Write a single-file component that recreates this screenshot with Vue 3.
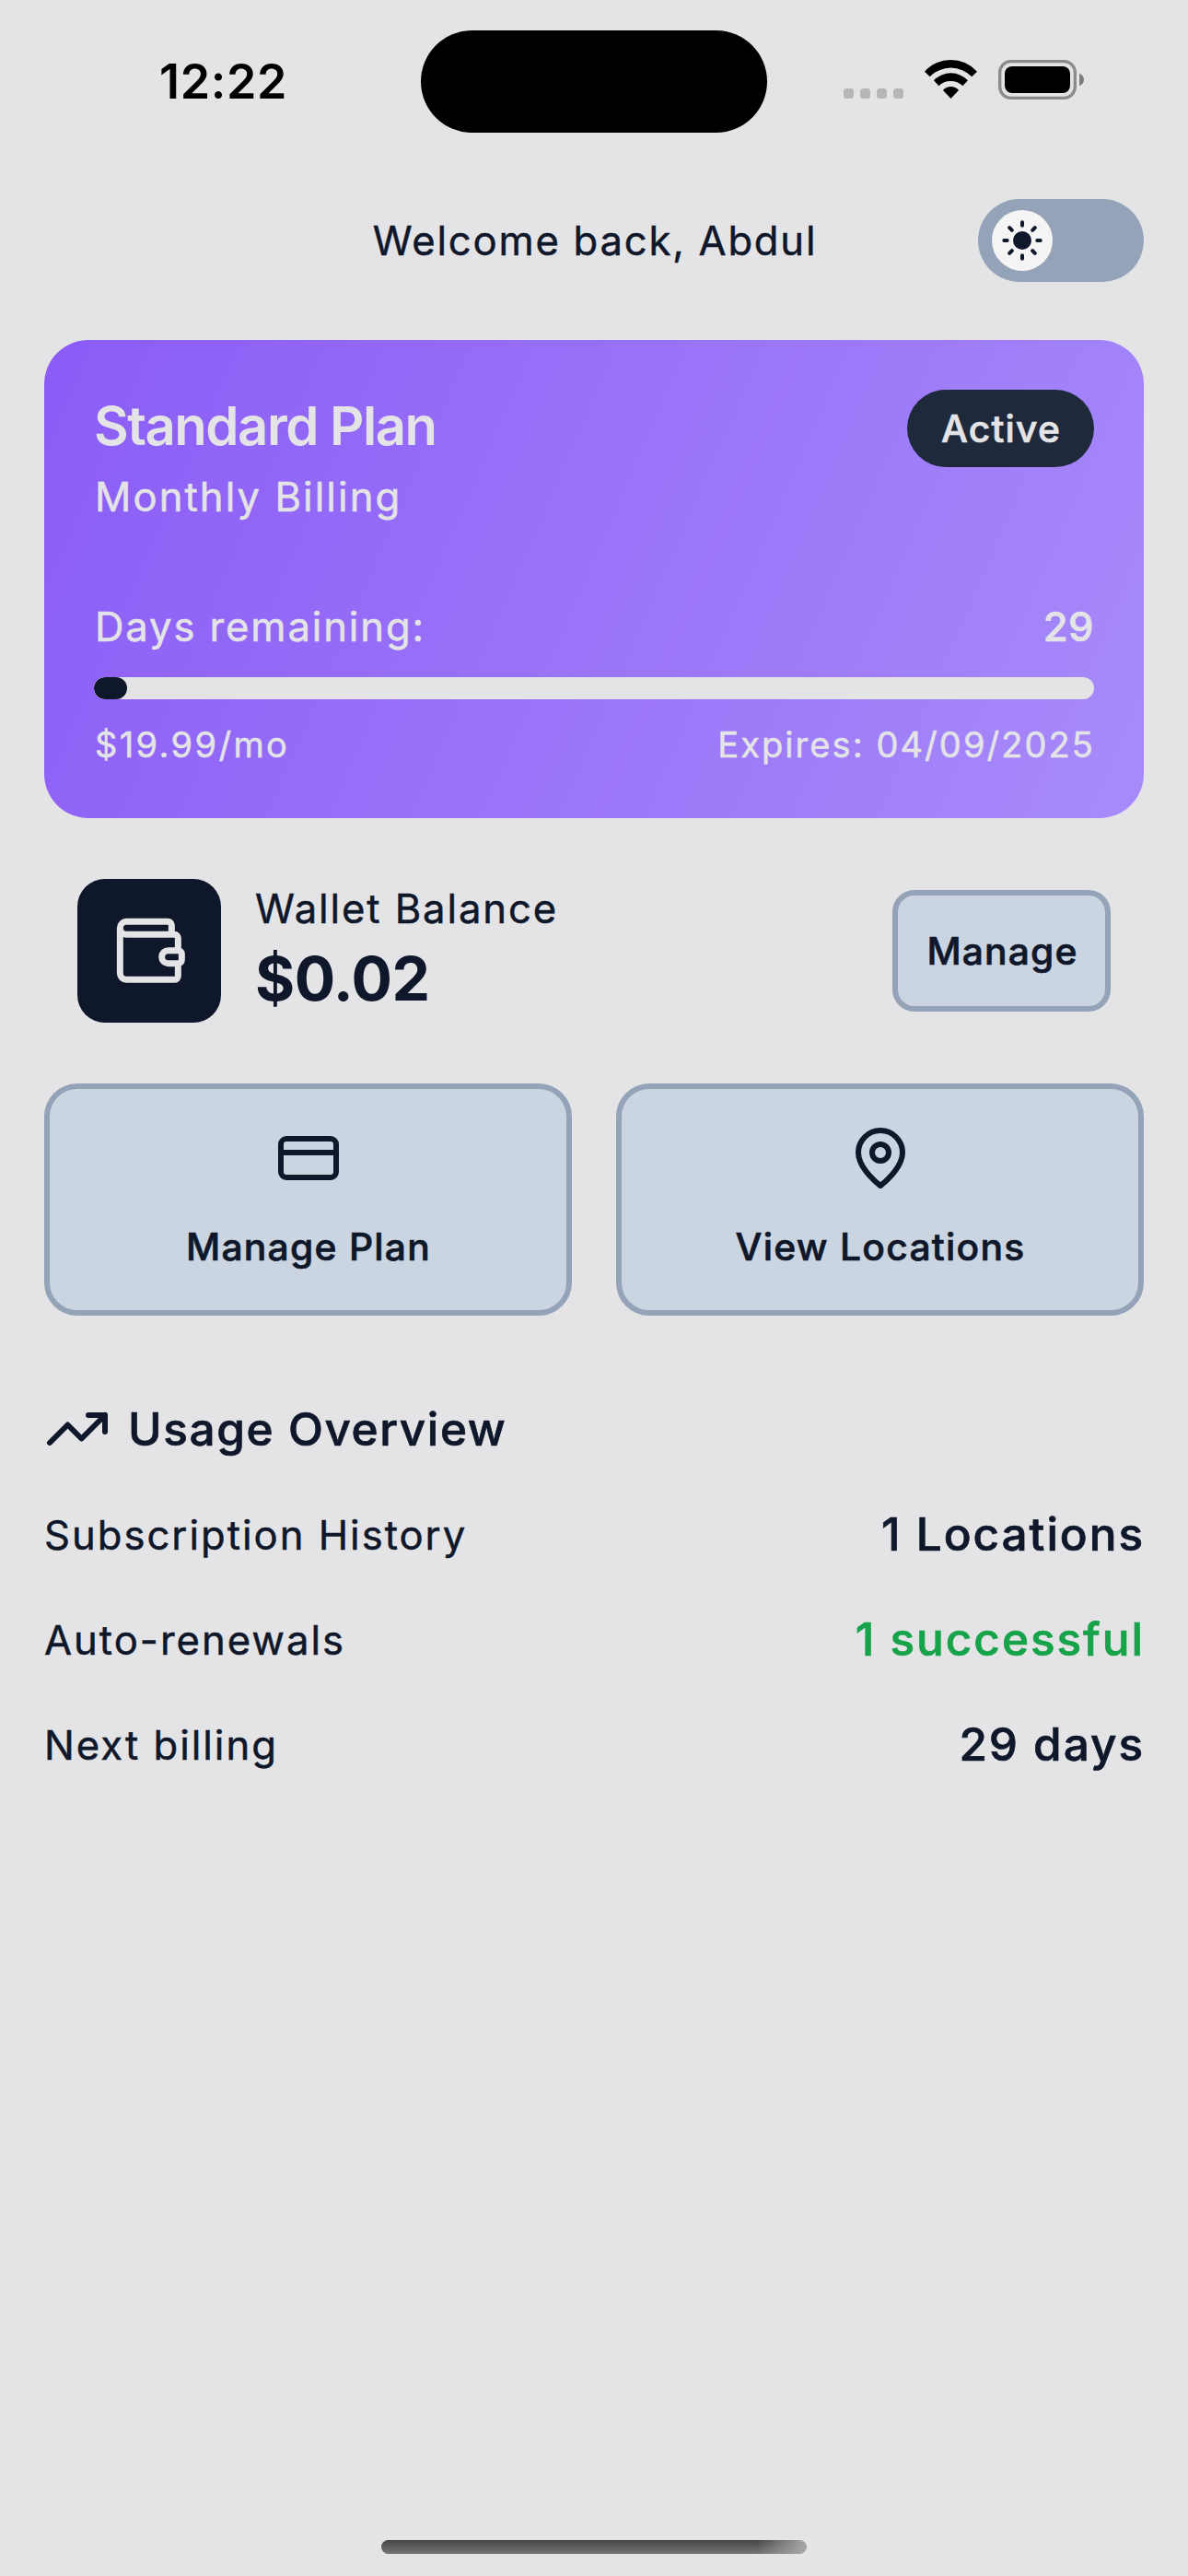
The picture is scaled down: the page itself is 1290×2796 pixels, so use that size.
<script setup>
import { ref, computed } from 'vue'

const daysRemaining = ref(29)
const progress = computed(() => ((30 - daysRemaining.value) / 30) * 100)

const usage = computed(() => [
  { label: 'Subscription History', value: '1 Locations' },
  { label: 'Auto-renewals', value: '1 successful', positive: true },
  { label: 'Next billing', value: `${daysRemaining.value} days` },
])
</script>

<template>
  <div class="screen">
    <div class="status-bar">
      <span class="time">12:22</span>
      <div class="island"></div>
      <div class="signal"><i v-for="n in 4" :key="n"></i></div>
      <svg class="wifi" viewBox="372 75 171 126">
        <path d="M372 113A115 115 0 0 1 543 113L526 130A95 95 0 0 0 389 130Z" />
        <path d="M402 142A76 76 0 0 1 513 142L496 160A55 55 0 0 0 418 160Z" />
        <path d="M432 174A33 33 0 0 1 483 174L457.5 201Z" />
      </svg>
      <svg class="battery" viewBox="612 75 279 129">
        <rect x="617" y="80" width="245" height="119" rx="36" fill="none" stroke="#8b8b8d" stroke-width="10" />
        <rect x="633" y="96" width="213" height="87" rx="24" fill="#000" />
        <path d="M876 119C886 123 891 131 891 139.500C891 148 886 156 876 160Z" fill="#7c7c7e" />
      </svg>
    </div>

    <header class="header">
      <h1 class="welcome regular">Welcome back, Abdul</h1>
      <div class="toggle">
        <div class="thumb">
          <svg viewBox="-33 -33 66 66">
            <circle r="10" fill="#0f172a" />
            <path
              d="M0-19.700V-16.300M0 16.300V19.700M-19.700 0H-16.300M16.300 0H19.700M-13.800-13.800L-11.200-11.200M11.200 11.200L13.800 13.800M13.800-13.800L11.200-11.200M-11.200 11.200L-13.800 13.800"
              stroke="#0f172a" stroke-width="4" stroke-linecap="round"
            />
          </svg>
        </div>
      </div>
    </header>

    <section class="plan">
      <div class="plan-top">
        <div>
          <h2 class="plan-name">Standard Plan</h2>
          <p class="plan-cycle regular">Monthly Billing</p>
        </div>
        <span class="badge medium">Active</span>
      </div>
      <div class="days">
        <span class="regular">Days remaining:</span>
        <span class="days-value medium">{{ daysRemaining }}</span>
      </div>
      <div class="track">
        <div class="fill" :style="{ width: progress + '%' }"></div>
      </div>
      <div class="plan-foot regular">
        <span>$19.99/mo</span>
        <span class="expires">Expires: 04/09/2025</span>
      </div>
    </section>

    <section class="wallet">
      <div class="wallet-icon">
        <svg viewBox="-93 -93 468 468" fill="none" stroke="#e4e4e6" stroke-width="21" stroke-linejoin="round">
          <path d="M214 88V58a12 12 0 0 0-12-12H67a21 21 0 0 0-21 21V214a21 21 0 0 0 21 21H223a12 12 0 0 0 12-12V182" />
          <path d="M46 67a21 21 0 0 0 21 21H223a12 12 0 0 1 12 12V140" />
          <path d="M235 140H203a21 21 0 0 0 0 42H235a12 12 0 0 0 12-12V152a12 12 0 0 0-12-12Z" />
        </svg>
      </div>
      <div class="wallet-text">
        <p class="wallet-label regular">Wallet Balance</p>
        <p class="wallet-amount">$0.02</p>
      </div>
      <button class="manage medium">Manage</button>
    </section>

    <section class="actions">
      <button class="action medium">
        <svg class="icon" viewBox="0 0 24 24">
          <rect x="2" y="5" width="20" height="14" rx="2" />
          <path d="M2 10H22" />
        </svg>
        <span>Manage Plan</span>
      </button>
      <button class="action medium">
        <svg class="icon" viewBox="0 0 24 24">
          <path d="M20 10c0 6-8 12-8 12s-8-6-8-12a8 8 0 0 1 16 0Z" />
          <circle cx="12" cy="10" r="3" />
        </svg>
        <span>View Locations</span>
      </button>
    </section>

    <section class="usage">
      <div class="usage-title">
        <svg class="icon" viewBox="0 0 24 24">
          <path d="M22 7L13.500 15.500L8.500 10.500L2 17" />
          <path d="M16 7H22V13" />
        </svg>
        <h2 class="medium">Usage Overview</h2>
      </div>
      <div v-for="row in usage" :key="row.label" class="usage-row">
        <span class="usage-label regular">{{ row.label }}</span>
        <span class="usage-value medium" :class="{ positive: row.positive }">{{ row.value }}</span>
      </div>
    </section>

    <div class="home-indicator"></div>
  </div>
</template>

<style>
html,
body {
  margin: 0;
  background: #e4e4e6;
}
</style>

<style scoped>
* {
  box-sizing: border-box;
}

.screen {
  display: flex;
  flex-direction: column;
  width: 1290px;
  height: 2796px;
  padding: 33px 48px 24px;
  overflow: hidden;
  background: #e4e4e6;
  color: #0f172a;
  font-family: Inter, "Liberation Sans", sans-serif;
}

h1,
h2,
p {
  margin: 0;
  font-weight: 400;
}

svg {
  display: block;
  overflow: visible;
}

button {
  padding: 0;
  border: 6px solid #94a3b8;
  background: #cbd5e1;
  color: #0f172a;
  font: 500 40.8px/60px Inter, "Liberation Sans", sans-serif;
}

/* Weights halfway between the installed Inter cuts */
.regular {
  -webkit-text-stroke: 0.5px currentColor;
}

.medium {
  font-weight: 500;
  -webkit-text-stroke: 0.7px currentColor;
}

.status-bar {
  display: flex;
  align-items: center;
  height: 111px;
  padding-left: 125px;
}

.time {
  width: 284px;
  color: #000;
  font-size: 52px;
  font-weight: 600;
  letter-spacing: 0.68px;
  line-height: 62px;
}

.island {
  width: 376px;
  height: 111px;
  border-radius: 56px;
  background: #000;
}

.signal {
  display: flex;
  gap: 7px;
  align-self: flex-end;
  margin: 0 23px 37px 83px;
}

.signal i {
  width: 11px;
  height: 11px;
  border-radius: 3.5px;
  background: #b6b6b8;
}

.wifi {
  width: 57px;
  height: 42px;
  margin: 0 23px 5px 0;
}

.battery {
  width: 93px;
  height: 43px;
  margin-bottom: 4px;
}

.header {
  display: grid;
  grid-template-columns: 180px 1fr 180px;
  align-items: center;
  height: 90px;
  margin-top: 72px;
}

.welcome {
  grid-column: 2;
  padding: 2px 0 0 2px;
  text-align: center;
  font-size: 43.6px;
  letter-spacing: 1.78px;
  line-height: 66px;
}

.toggle {
  display: flex;
  align-items: center;
  height: 90px;
  padding-left: 15px;
  border-radius: 45px;
  background: #94a3b8;
}

.thumb {
  width: 66px;
  height: 66px;
  border-radius: 50%;
  background: #f4f4f4;
}

.plan {
  flex: none;
  height: 519px;
  margin-top: 63px;
  padding: 54px;
  border-radius: 48px;
  background: linear-gradient(113.5deg, #8b5cf6, #a78bfa);
  color: #e4e4e6;
}

.plan-top,
.days,
.plan-foot {
  display: flex;
  align-items: flex-start;
  justify-content: space-between;
}

.plan-name {
  padding-top: 1px;
  font-size: 58px;
  font-weight: 600;
  letter-spacing: -1.48px;
  line-height: 77px;
}

.plan-cycle {
  margin-top: 6px;
  padding-left: 1px;
  font-size: 43.6px;
  letter-spacing: 2.08px;
  line-height: 66px;
}

.badge {
  width: 203px;
  height: 84px;
  padding-left: 1px;
  border-radius: 42px;
  background: #1e293b;
  text-align: center;
  font-size: 40.8px;
  letter-spacing: 1.2px;
  line-height: 84px;
}

.days {
  margin-top: 75px;
  padding-left: 1px;
  font-size: 43.6px;
  letter-spacing: 1.88px;
  line-height: 66px;
}

.days-value {
  letter-spacing: 0.44px;
}

.track {
  height: 24px;
  margin-top: 21px;
  overflow: hidden;
  border-radius: 12px;
  background: #e4e4e6;
}

.fill {
  height: 24px;
  border-radius: 12px;
  background: #0f172a;
}

.plan-foot {
  margin: 20px -1px 0 0;
  padding-left: 1px;
  font-size: 38px;
  letter-spacing: 2.36px;
  line-height: 58px;
}

.expires {
  letter-spacing: 2.07px;
}

.wallet {
  display: flex;
  align-items: center;
  height: 156px;
  margin: 66px 36px 0;
}

.wallet-icon {
  width: 156px;
  height: 156px;
  border-radius: 30px;
  background: #0f172a;
}

.wallet-text {
  align-self: flex-start;
  margin: 0 auto 0 37px;
}

.wallet-label {
  font-size: 43.6px;
  letter-spacing: 1.91px;
  line-height: 66px;
}

.wallet-amount {
  font-size: 66px;
  font-weight: 700;
  letter-spacing: -0.5px;
  line-height: 84px;
}

.manage {
  width: 237px;
  height: 132px;
  padding-left: 2px;
  border-radius: 24px;
  letter-spacing: 1.1px;
}

.actions {
  display: grid;
  grid-template-columns: 1fr 1fr;
  gap: 48px;
  margin-top: 66px;
}

.action {
  display: flex;
  flex-direction: column;
  align-items: center;
  gap: 30px;
  height: 252px;
  padding-top: 39px;
  border-radius: 36px;
  letter-spacing: 1.25px;
}

.action span {
  padding-left: 1px;
}

.icon {
  width: 72px;
  height: 72px;
  fill: none;
  stroke: #0f172a;
  stroke-width: 2;
  stroke-linecap: round;
  stroke-linejoin: round;
}

.usage {
  margin-top: 87px;
}

.usage-title {
  display: flex;
  align-items: center;
  gap: 19px;
  height: 72px;
  margin-bottom: 21px;
}

.usage-title h2 {
  font-size: 49.5px;
  letter-spacing: 1.6px;
}

.usage-row {
  display: flex;
  align-items: center;
  justify-content: space-between;
  height: 114px;
  margin-right: -1px;
}

.usage-label {
  padding-top: 2px;
  font-size: 43.6px;
  letter-spacing: 2px;
}

.usage-value {
  font-size: 49.5px;
  letter-spacing: 1.95px;
}

.positive {
  color: #16a34a;
}

.home-indicator {
  width: 462px;
  height: 15px;
  margin: auto auto 0;
  border-radius: 8px;
  background:
    linear-gradient(100deg, transparent 88%, #a4a4a6 99%),
    linear-gradient(#454545, #757575);
}
</style>
